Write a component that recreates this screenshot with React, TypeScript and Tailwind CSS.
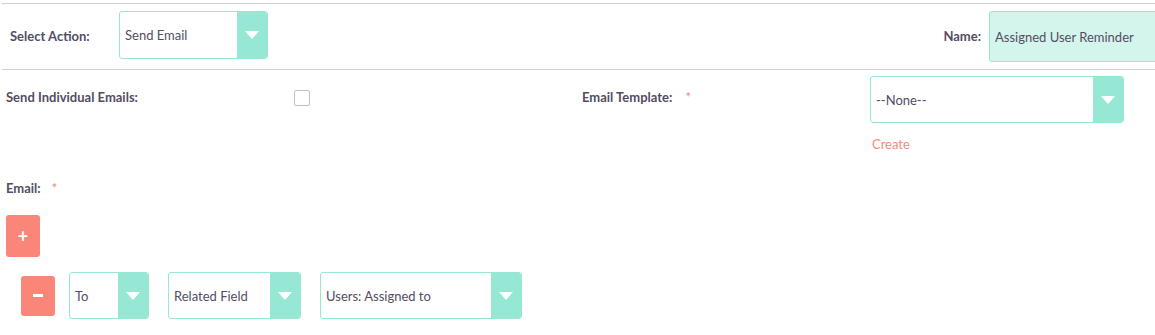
import React from "react";

function Select({
  value,
  width,
  height = "h-[47px]",
}: {
  value: string;
  width: string;
  height?: string;
}) {
  return (
    <div
      className={`${width} ${height} flex shrink-0 overflow-hidden rounded-[3px] border border-[#96e8d5] bg-white`}
    >
      <div className="flex flex-1 items-center pt-[2px] pl-[5px] text-[13px] text-[#534d64]">
        {value}
      </div>
      <div className="flex w-[30px] items-center justify-center bg-[#96e8d5]">
        <div className="h-0 w-0 border-x-[7px] border-t-[8px] border-x-transparent border-t-white" />
      </div>
    </div>
  );
}

function Label({ children }: { children: React.ReactNode }) {
  return (
    <span className="text-[13px] leading-4 font-bold text-[#534d64]">
      {children}
    </span>
  );
}

export default function App() {
  return (
    <div className="h-[335px] w-[1155px] overflow-hidden bg-white font-['Lato',sans-serif] text-[#534d64]">
      <div className="mt-[3px] ml-[2px] border-t border-[#cdd1d5]">
        <div className="flex h-[66px] items-start border-b border-[#cdd1d5] pt-[7px]">
          <div className="mt-[17px] flex w-[117px] shrink-0 pl-[8px]">
            <Label>Select Action:</Label>
          </div>
          <Select value="Send Email" width="w-[149px]" height="h-[48px]" />
          <div className="mt-[17px] flex w-[713px] shrink-0 justify-end">
            <Label>Name:</Label>
          </div>
          <div className="ml-[8px] flex h-[51px] w-[220px] shrink-0 items-center rounded-[3px] border border-[#96e8d5] bg-[#d4f5ec] pt-[2px] pl-[5px] text-[13px]">
            Assigned User Reminder
          </div>
        </div>
      </div>

      <div className="mt-[6px] flex items-start">
        <div className="mt-[13px] flex w-[294px] shrink-0 pl-[6px]">
          <Label>Send Individual Emails:</Label>
        </div>
        <div className="mt-[14px] h-4 w-4 shrink-0 rounded-[2px] border border-[#b8c3cf] bg-white" />
        <div className="w-[272px] shrink-0" />
        <div className="mt-[13px] flex w-[288px] shrink-0">
          <Label>Email Template:</Label>
          <span className="ml-[13px] text-[13px] leading-4 text-[#f08377]">*</span>
        </div>
        <div className="flex flex-col">
          <Select value="--None--" width="w-[254px]" />
          <a className="mt-[13px] pl-[2px] text-[13px] leading-4 text-[#f58a7e]">
            Create
          </a>
        </div>
      </div>

      <div className="mt-[28px] flex pl-[6px]">
        <Label>Email:</Label>
        <span className="ml-[11px] text-[13px] leading-4 text-[#f08377]">*</span>
      </div>

      <div className="mt-[19px] pl-[6px]">
        <button className="flex h-[42px] w-[34px] items-center justify-center rounded-[3px] bg-[#f98679] text-[18px] leading-none font-bold text-white">
          +
        </button>
      </div>

      <div className="mt-[15px] flex items-center">
        <button className="ml-[21px] flex h-[40px] w-[34px] shrink-0 items-center justify-center rounded-[3px] bg-[#f98679]">
          <span className="h-[3px] w-[10px] bg-white" />
        </button>
        <div className="ml-[14px] flex gap-[19px]">
          <Select value="To" width="w-[80px]" />
          <Select value="Related Field" width="w-[133px]" />
          <Select value="Users: Assigned to" width="w-[202px]" />
        </div>
      </div>
    </div>
  );
}
